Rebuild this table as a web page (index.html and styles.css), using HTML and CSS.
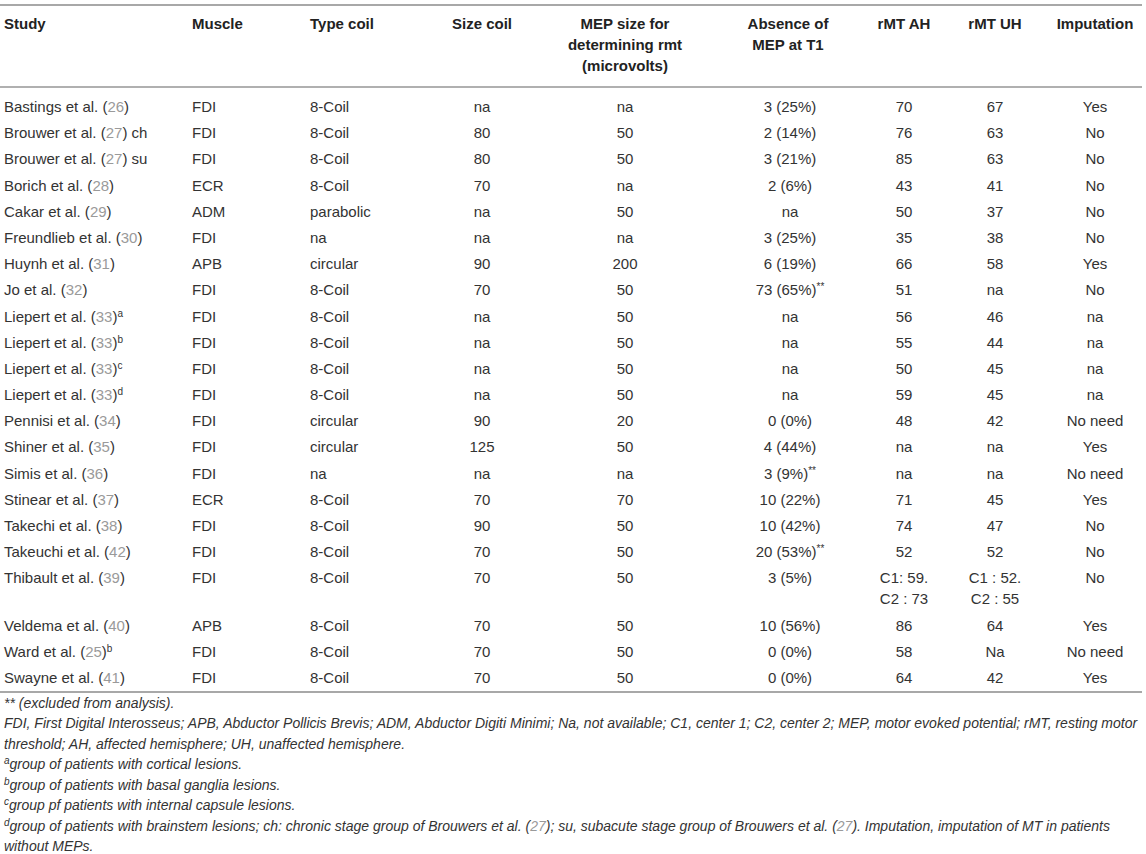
FILE: index.html
```html
<!DOCTYPE html>
<html lang="en">
<head>
<meta charset="utf-8">
<title>Table</title>
<link rel="stylesheet" href="styles.css">
</head>
<body>
<div class="wrap">
<table class="data">
  <colgroup>
    <col class="c1"><col class="c2"><col class="c3"><col class="c4"><col class="c5"><col class="c6"><col class="c7"><col class="c8"><col class="c9">
  </colgroup>
  <thead>
    <tr>
      <th class="l">Study</th>
      <th class="l">Muscle</th>
      <th class="l">Type coil</th>
      <th>Size coil</th>
      <th>MEP size for determining rmt (microvolts)</th>
      <th class="abs">Absence of MEP at T1</th>
      <th>rMT AH</th>
      <th>rMT UH</th>
      <th class="imp">Imputation</th>
    </tr>
  </thead>
  <tbody>
    <tr><td class="l">Bastings et al. (<span class="ref">26</span>)</td><td class="l">FDI</td><td class="l">8-Coil</td><td>na</td><td>na</td><td class="abs">3 (25%)</td><td>70</td><td>67</td><td class="imp">Yes</td></tr>
    <tr><td class="l">Brouwer et al. (<span class="ref">27</span>) ch</td><td class="l">FDI</td><td class="l">8-Coil</td><td>80</td><td>50</td><td class="abs">2 (14%)</td><td>76</td><td>63</td><td class="imp">No</td></tr>
    <tr><td class="l">Brouwer et al. (<span class="ref">27</span>) su</td><td class="l">FDI</td><td class="l">8-Coil</td><td>80</td><td>50</td><td class="abs">3 (21%)</td><td>85</td><td>63</td><td class="imp">No</td></tr>
    <tr><td class="l">Borich et al. (<span class="ref">28</span>)</td><td class="l">ECR</td><td class="l">8-Coil</td><td>70</td><td>na</td><td class="abs">2 (6%)</td><td>43</td><td>41</td><td class="imp">No</td></tr>
    <tr><td class="l">Cakar et al. (<span class="ref">29</span>)</td><td class="l">ADM</td><td class="l">parabolic</td><td>na</td><td>50</td><td class="abs">na</td><td>50</td><td>37</td><td class="imp">No</td></tr>
    <tr><td class="l">Freundlieb et al. (<span class="ref">30</span>)</td><td class="l">FDI</td><td class="l">na</td><td>na</td><td>na</td><td class="abs">3 (25%)</td><td>35</td><td>38</td><td class="imp">No</td></tr>
    <tr><td class="l">Huynh et al. (<span class="ref">31</span>)</td><td class="l">APB</td><td class="l">circular</td><td>90</td><td>200</td><td class="abs">6 (19%)</td><td>66</td><td>58</td><td class="imp">Yes</td></tr>
    <tr><td class="l">Jo et al. (<span class="ref">32</span>)</td><td class="l">FDI</td><td class="l">8-Coil</td><td>70</td><td>50</td><td class="abs">73 (65%)<sup>**</sup></td><td>51</td><td>na</td><td class="imp">No</td></tr>
    <tr><td class="l">Liepert et al. (<span class="ref">33</span>)<sup>a</sup></td><td class="l">FDI</td><td class="l">8-Coil</td><td>na</td><td>50</td><td class="abs">na</td><td>56</td><td>46</td><td class="imp">na</td></tr>
    <tr><td class="l">Liepert et al. (<span class="ref">33</span>)<sup>b</sup></td><td class="l">FDI</td><td class="l">8-Coil</td><td>na</td><td>50</td><td class="abs">na</td><td>55</td><td>44</td><td class="imp">na</td></tr>
    <tr><td class="l">Liepert et al. (<span class="ref">33</span>)<sup>c</sup></td><td class="l">FDI</td><td class="l">8-Coil</td><td>na</td><td>50</td><td class="abs">na</td><td>50</td><td>45</td><td class="imp">na</td></tr>
    <tr><td class="l">Liepert et al. (<span class="ref">33</span>)<sup>d</sup></td><td class="l">FDI</td><td class="l">8-Coil</td><td>na</td><td>50</td><td class="abs">na</td><td>59</td><td>45</td><td class="imp">na</td></tr>
    <tr><td class="l">Pennisi et al. (<span class="ref">34</span>)</td><td class="l">FDI</td><td class="l">circular</td><td>90</td><td>20</td><td class="abs">0 (0%)</td><td>48</td><td>42</td><td class="imp">No need</td></tr>
    <tr><td class="l">Shiner et al. (<span class="ref">35</span>)</td><td class="l">FDI</td><td class="l">circular</td><td>125</td><td>50</td><td class="abs">4 (44%)</td><td>na</td><td>na</td><td class="imp">Yes</td></tr>
    <tr><td class="l">Simis et al. (<span class="ref">36</span>)</td><td class="l">FDI</td><td class="l">na</td><td>na</td><td>na</td><td class="abs">3 (9%)<sup>**</sup></td><td>na</td><td>na</td><td class="imp">No need</td></tr>
    <tr><td class="l">Stinear et al. (<span class="ref">37</span>)</td><td class="l">ECR</td><td class="l">8-Coil</td><td>70</td><td>70</td><td class="abs">10 (22%)</td><td>71</td><td>45</td><td class="imp">Yes</td></tr>
    <tr><td class="l">Takechi et al. (<span class="ref">38</span>)</td><td class="l">FDI</td><td class="l">8-Coil</td><td>90</td><td>50</td><td class="abs">10 (42%)</td><td>74</td><td>47</td><td class="imp">No</td></tr>
    <tr><td class="l">Takeuchi et al. (<span class="ref">42</span>)</td><td class="l">FDI</td><td class="l">8-Coil</td><td>70</td><td>50</td><td class="abs">20 (53%)<sup>**</sup></td><td>52</td><td>52</td><td class="imp">No</td></tr>
    <tr><td class="l">Thibault et al. (<span class="ref">39</span>)</td><td class="l">FDI</td><td class="l">8-Coil</td><td>70</td><td>50</td><td class="abs">3 (5%)</td><td>C1: 59.<br>C2 : 73</td><td>C1 : 52.<br>C2 : 55</td><td class="imp">No</td></tr>
    <tr><td class="l">Veldema et al. (<span class="ref">40</span>)</td><td class="l">APB</td><td class="l">8-Coil</td><td>70</td><td>50</td><td class="abs">10 (56%)</td><td>86</td><td>64</td><td class="imp">Yes</td></tr>
    <tr><td class="l">Ward et al. (<span class="ref">25</span>)<sup>b</sup></td><td class="l">FDI</td><td class="l">8-Coil</td><td>70</td><td>50</td><td class="abs">0 (0%)</td><td>58</td><td>Na</td><td class="imp">No need</td></tr>
    <tr><td class="l">Swayne et al. (<span class="ref">41</span>)</td><td class="l">FDI</td><td class="l">8-Coil</td><td>70</td><td>50</td><td class="abs">0 (0%)</td><td>64</td><td>42</td><td class="imp">Yes</td></tr>
  </tbody>
</table>
<div class="notes">
  <p>** (excluded from analysis).</p>
  <p>FDI, First Digital Interosseus; APB, Abductor Pollicis Brevis; ADM, Abductor Digiti Minimi; Na, not available; C1, center 1; C2, center 2; MEP, motor evoked potential; rMT, resting motor<br>threshold; AH, affected hemisphere; UH, unaffected hemisphere.</p>
  <p><sup>a</sup>group of patients with cortical lesions.</p>
  <p><sup>b</sup>group of patients with basal ganglia lesions.</p>
  <p><sup>c</sup>group pf patients with internal capsule lesions.</p>
  <p><sup>d</sup>group of patients with brainstem lesions; ch: chronic stage group of Brouwers et al. (<span class="ref">27</span>); su, subacute stage group of Brouwers et al. (<span class="ref">27</span>). Imputation, imputation of MT in patients<br>without MEPs.</p>
</div>
</div>
</body>
</html>
```

FILE: styles.css
```css
html, body {
  margin: 0;
  padding: 0;
  background: #ffffff;
}
body {
  font-family: "Liberation Sans", Arial, sans-serif;
  color: #333333;
}
.wrap {
  width: 1142px;
  padding-top: 4px;
}
.data {
  width: 1142px;
  border-collapse: collapse;
  table-layout: fixed;
  font-size: 15px;
  line-height: 21px;
  border-top: 2px solid #a8a8a8;
  border-bottom: 2px solid #a8a8a8;
}
.c1 { width: 188px; }
.c2 { width: 118px; }
.c3 { width: 114px; }
.c4 { width: 124px; }
.c5 { width: 162px; }
.c6 { width: 152px; }
.c7 { width: 92px; }
.c8 { width: 90px; }
.c9 { width: 102px; }
.data th {
  font-weight: bold;
  color: #222222;
  text-align: center;
  vertical-align: top;
  padding: 7px 4px 10px;
  border-bottom: 2px solid #b0b0b0;
}
.data td {
  text-align: center;
  vertical-align: top;
  padding: 2.6px 4px;
  white-space: nowrap;
}
.data .l {
  text-align: left;
}
.data td.abs {
  padding-left: 19px;
  padding-right: 3px;
}
.data th.abs {
  padding-left: 32px;
  padding-right: 20px;
}
.data .imp {
  padding-left: 8px;
  padding-right: 0;
}
.data tbody tr:first-child td {
  padding-top: 8px;
}
.ref {
  color: #9a9a9a;
}
sup {
  font-size: 10px;
  line-height: 0;
  vertical-align: 5px;
}
.notes {
  padding: 0 0 0 4px;
  font-size: 14px;
  line-height: 20.5px;
  font-style: italic;
  color: #333333;
}
.notes p {
  margin: 0;
}
.notes sup {
  font-size: 10px;
  vertical-align: 5px;
}
```
